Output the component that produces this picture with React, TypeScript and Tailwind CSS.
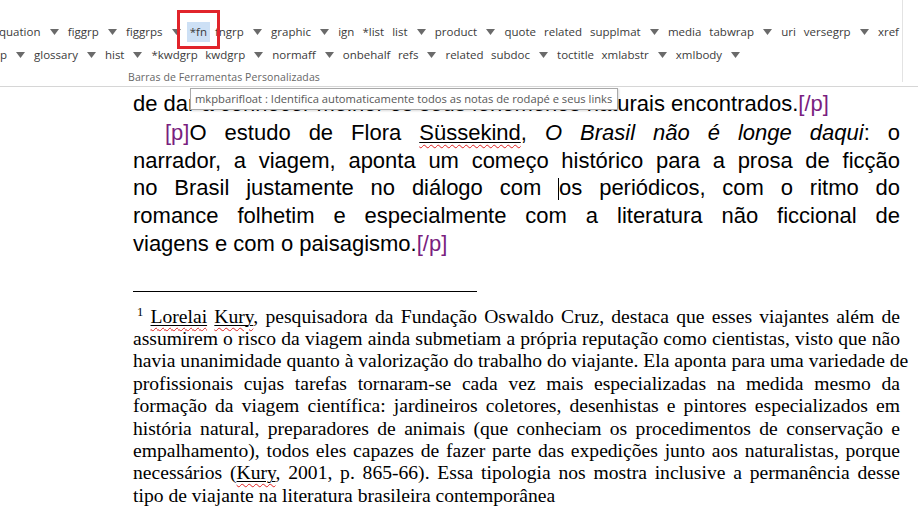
const ARROW = "▼";

const row1 = [
  "quation", ARROW, "figgrp", ARROW, "figgrps", ARROW, "*fn", "fngrp", ARROW,
  "graphic", ARROW, "ign", "*list", "list", ARROW, "product", ARROW, "quote",
  "related", "supplmat", ARROW, "media", "tabwrap", ARROW, "uri", "versegrp", ARROW, "xref",
];

const row2 = [
  "p", ARROW, "glossary", ARROW, "hist", ARROW, "*kwdgrp", "kwdgrp", ARROW, "normaff",
  ARROW, "onbehalf", "refs", ARROW, "related", "subdoc", ARROW, "toctitle", "xmlabstr",
  ARROW, "xmlbody", ARROW,
];

function Arrow() {
  return (
    <span className="flex h-[22px] w-[18px] items-center justify-center">
      <svg width="9" height="6" viewBox="0 0 9 6">
        <path d="M0 0h9L4.5 6z" fill="#6a6a6a" />
      </svg>
    </span>
  );
}

function RibbonRow({ items, className }: { items: string[]; className: string }) {
  return (
    <div className={`flex h-[22px] shrink-0 items-center ${className}`}>
      {items.map((it, i) =>
        it === ARROW ? (
          <Arrow key={i} />
        ) : (
          <span
            key={i}
            className={`flex h-[20px] items-center px-[3px] ${it === "*fn" ? "bg-[#cde0f5]" : ""}`}
          >
            {it}
          </span>
        )
      )}
    </div>
  );
}

function Squiggle({ children }: { children: React.ReactNode }) {
  return (
    <span className="underline decoration-black decoration-1 underline-offset-[2px]">
      <span className="underline decoration-wavy decoration-[#e02020] decoration-1 underline-offset-[4px]">
        {children}
      </span>
    </span>
  );
}

const Tag = ({ t }: { t: string }) => <span className="text-[#7a1f80]">{t}</span>;

const J = "text-justify [text-align-last:justify] whitespace-nowrap";

export default function App() {
  return (
    <div className="relative h-[511px] w-[918px] overflow-hidden bg-white">
      {/* Ribbon */}
      <div className="flex h-[87px] border-b border-[#d6d6d6] bg-white font-['Open_Sans',sans-serif] text-[11.5px] text-[#3b3b3b]">
        <div className="flex h-[86px] w-[902px] flex-col overflow-hidden">
          <div className="h-[21px] shrink-0" />
          <RibbonRow items={row1} className="-ml-[4px] gap-[2px]" />
          <div className="h-[1px] shrink-0" />
          <RibbonRow items={row2} className="-ml-[3px] gap-[1.5px]" />
          <div className="ml-[128px] mt-[4px] shrink-0 text-[10.5px] leading-[15px] tracking-[0.1px] text-[#666]">
            Barras de Ferramentas Personalizadas
          </div>
        </div>
        <div className="h-[82px] w-px bg-[#e3e3e3]" />
      </div>

      {/* red highlight around *fn */}
      <div className="absolute left-[177px] top-[10px] h-[39px] w-[43px] border-[3px] border-[#e1242b]" />

      {/* Document body */}
      <div className="ml-[133px] w-[767px] pt-[3px] font-['Liberation_Sans',Arial,sans-serif] text-[22px] leading-[28px] text-black">
        <div className="whitespace-nowrap">
          de dar a conhecer melhor os seus fenômenos naturais encontrados.<Tag t="[/p]" />
        </div>
        <div className="mt-[1px] leading-[27.7px]">
          <div className={`${J} pl-[32px]`}>
            <Tag t="[p]" />O estudo de Flora <Squiggle>Süssekind</Squiggle>,{" "}
            <i>O Brasil não é longe daqui</i>: o
          </div>
          <div className={J}>narrador, a viagem, aponta um começo histórico para a prosa de ficção</div>
          <div className={J}>
            no Brasil justamente no diálogo com{" "}
            <span className="inline-block h-[22px] w-0 border-l border-black align-[-5px]" />os
            periódicos, com o ritmo do
          </div>
          <div className={J}>romance folhetim e especialmente com a literatura não ficcional de</div>
          <div className="whitespace-nowrap">
            viagens e com o paisagismo.<Tag t="[/p]" />
          </div>
        </div>

        {/* footnote separator */}
        <div className="mt-[33px] h-px w-[344px] bg-black" />

        <div className="mt-[14px] font-['Liberation_Serif','Times_New_Roman',serif] text-[19.6px] leading-[22.4px]">
          <div className={J}>
            <span className="ml-[4px] align-[7px] text-[12.5px] leading-[0]">1</span>{" "}
            <Squiggle>Lorelai</Squiggle> <Squiggle>Kury</Squiggle>, pesquisadora da Fundação
            Oswaldo Cruz, destaca que esses viajantes além de
          </div>
          <div className={J}>
            assumirem o risco da viagem ainda submetiam a própria reputação como cientistas, visto que não
          </div>
          <div className={J}>
            havia unanimidade quanto à valorização do trabalho do viajante. Ela aponta para uma variedade de
          </div>
          <div className={J}>
            profissionais cujas tarefas tornaram-se cada vez mais especializadas na medida mesmo da
          </div>
          <div className={J}>
            formação da viagem científica: jardineiros coletores, desenhistas e pintores especializados em
          </div>
          <div className={J}>
            história natural, preparadores de animais (que conheciam os procedimentos de conservação e
          </div>
          <div className={J}>
            empalhamento), todos eles capazes de fazer parte das expedições junto aos naturalistas, porque
          </div>
          <div className={J}>
            necessários (<Squiggle>Kury</Squiggle>, 2001, p. 865-66). Essa tipologia nos mostra inclusive a
            permanência desse
          </div>
          <div className="whitespace-nowrap">tipo de viajante na literatura brasileira contemporânea</div>
        </div>
      </div>

      {/* tooltip */}
      <div className="absolute left-[190px] top-[88px] flex h-[22px] w-[428px] items-center whitespace-nowrap border border-[#a9a9a9] bg-white pl-[4px] font-['Open_Sans',sans-serif] text-[11.2px] text-[#575757] shadow-[1px_1px_2px_rgba(0,0,0,0.15)]">
        mkpbarifloat : Identifica automaticamente todos as notas de rodapé e seus links
      </div>
    </div>
  );
}
